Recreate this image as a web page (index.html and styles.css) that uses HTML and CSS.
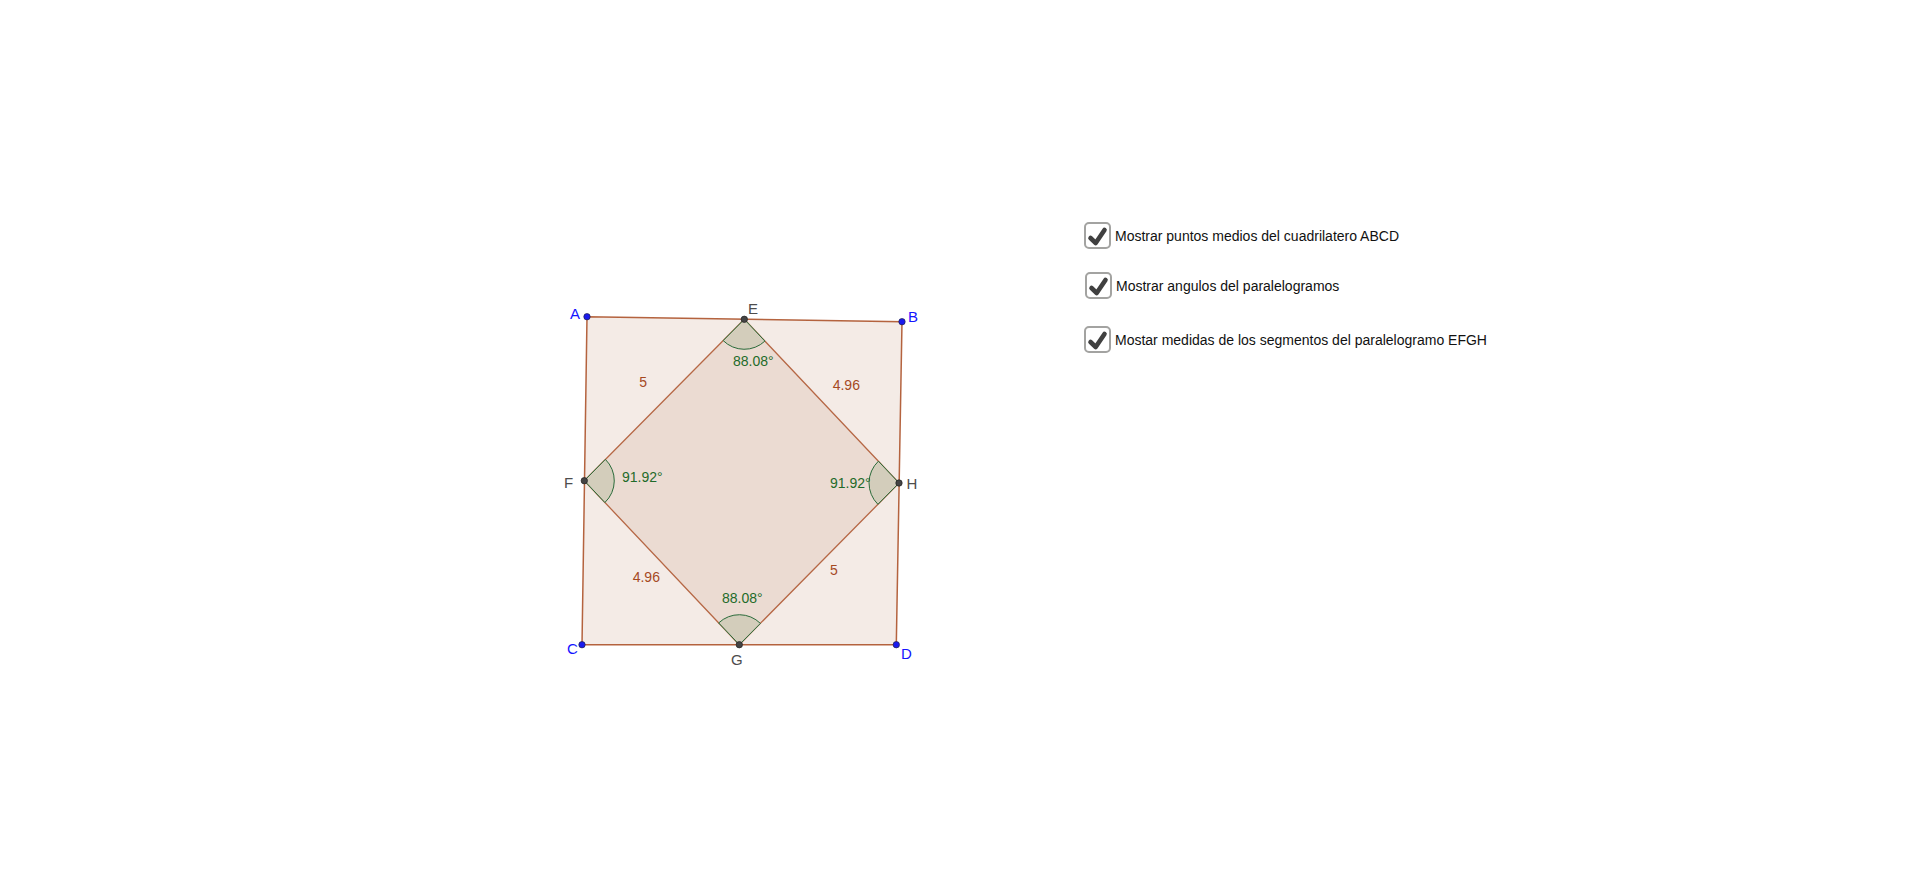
FILE: index.html
```html
<!DOCTYPE html>
<html lang="es">
<head>
    <meta charset="UTF-8">
    <title>Paralelogramo de puntos medios</title>
    <link rel="stylesheet" href="styles.css">
</head>
<body>
    <div class="applet">
        <svg class="board" viewBox="0 0 1920 878" xmlns="http://www.w3.org/2000/svg">
            <!-- cuadrilatero ABCD -->
            <polygon class="quad" points="587,316.7 902,321.7 896.3,644.7 582,644.7"/>
            <!-- paralelogramo EFGH -->
            <polygon class="para" points="744.3,319.3 584.3,480.7 739.3,644.7 899,483"/>

            <!-- angulos -->
            <path class="angle" d="M744.3 319.3 L723.2 340.6 A30 30 0 0 0 764.9 341.1 Z"/>
            <path class="angle" d="M584.3 480.7 L605.4 459.4 A30 30 0 0 1 604.9 502.5 Z"/>
            <path class="angle" d="M899 483 L878.4 461.2 A30 30 0 0 0 877.9 504.3 Z"/>
            <path class="angle" d="M739.3 644.7 L718.7 622.9 A30 30 0 0 1 760.4 623.4 Z"/>

            <!-- puntos -->
            <circle class="pt-blue" cx="587" cy="316.7" r="3.2"/>
            <circle class="pt-blue" cx="902" cy="321.7" r="3.2"/>
            <circle class="pt-blue" cx="582" cy="644.7" r="3.2"/>
            <circle class="pt-blue" cx="896.3" cy="644.7" r="3.2"/>
            <circle class="pt-dark" cx="744.3" cy="319.3" r="3.2"/>
            <circle class="pt-dark" cx="584.3" cy="480.7" r="3.2"/>
            <circle class="pt-dark" cx="739.3" cy="644.7" r="3.2"/>
            <circle class="pt-dark" cx="899" cy="483" r="3.2"/>

            <!-- etiquetas -->
            <text class="lbl-blue" x="570" y="319">A</text>
            <text class="lbl-blue" x="908" y="322">B</text>
            <text class="lbl-blue" x="567" y="654">C</text>
            <text class="lbl-blue" x="901" y="659">D</text>
            <text class="lbl-dark" x="748" y="314">E</text>
            <text class="lbl-dark" x="564" y="488.3">F</text>
            <text class="lbl-dark" x="731" y="665">G</text>
            <text class="lbl-dark" x="906.5" y="489">H</text>

            <!-- medidas -->
            <text class="lbl-size" x="639.3" y="387">5</text>
            <text class="lbl-size" x="832.7" y="390">4.96</text>
            <text class="lbl-size" x="632.7" y="581.7">4.96</text>
            <text class="lbl-size" x="830" y="575">5</text>
            <text class="lbl-angle" x="733" y="366">88.08°</text>
            <text class="lbl-angle" x="622" y="482">91.92°</text>
            <text class="lbl-angle" x="830" y="488">91.92°</text>
            <text class="lbl-angle" x="722" y="602.7">88.08°</text>
        </svg>

        <div class="controls">
            <label class="check-row">
                <span class="check-box"><svg viewBox="0 0 27 27"><path d="M6.5 16 L11.7 21 L20.5 8"/></svg></span>
                Mostrar puntos medios del cuadrilatero ABCD
            </label>
            <label class="check-row row-angles">
                <span class="check-box"><svg viewBox="0 0 27 27"><path d="M6.5 16 L11.7 21 L20.5 8"/></svg></span>
                Mostrar angulos del paralelogramos
            </label>
            <label class="check-row row-sizes">
                <span class="check-box"><svg viewBox="0 0 27 27"><path d="M6.5 16 L11.7 21 L20.5 8"/></svg></span>
                Mostar medidas de los segmentos del paralelogramo EFGH
            </label>
        </div>
    </div>
</body>
</html>
```

FILE: styles.css
```css
body {
    margin: 0;
    background: #fff;
    font-family: "Liberation Sans", Arial, sans-serif;
    overflow: hidden;
}
.applet {
    position: relative;
    width: 1920px;
    height: 878px;
}
.board {
    display: block;
    width: 1920px;
    height: 878px;
}
.quad {
    fill: #f4ebe6;
    stroke: #a8491f;
    stroke-width: 1.5;
    stroke-opacity: 0.85;
}
.para {
    fill: #ebdbd2;
    stroke: #a8491f;
    stroke-width: 1.3;
    stroke-opacity: 0.8;
}
.angle {
    fill: #d3cdbb;
    stroke: #2a6b3a;
    stroke-width: 1;
}
.pt-blue {
    fill: #1a1aee;
    stroke: #22224a;
    stroke-width: 0.7;
}
.pt-dark {
    fill: #444;
    stroke: #222;
    stroke-width: 0.7;
}
text {
    font-size: 14px;
}
.lbl-blue {
    fill: #1414ff;
    font-size: 15px;
}
.lbl-dark {
    fill: #4d4d4d;
    font-size: 15px;
}
.lbl-size {
    fill: #a5491f;
}
.lbl-angle {
    fill: #1f6b2a;
}
.controls {
    position: absolute;
    left: 1084px;
    top: 222px;
    display: flex;
    flex-direction: column;
}
.check-row {
    display: flex;
    align-items: center;
    gap: 4px;
    font-size: 14px;
    color: #111;
}
.row-angles {
    margin-top: 23px;
    margin-left: 1px;
}
.row-sizes {
    margin-top: 27px;
}
.check-box {
    box-sizing: border-box;
    width: 27px;
    height: 27px;
    border: 2px solid #a3a3a1;
    border-radius: 5px;
    background: #fff;
    flex-shrink: 0;
}
.check-box svg {
    display: block;
    width: 27px;
    height: 27px;
    margin: -2px;
}
.check-box path {
    fill: none;
    stroke: #404040;
    stroke-width: 4.6;
    stroke-linecap: round;
    stroke-linejoin: round;
}
```
